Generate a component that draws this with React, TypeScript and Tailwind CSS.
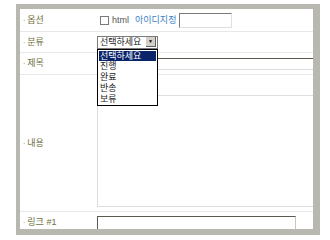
import React from "react";

const Label = ({ children }: { children: React.ReactNode }) => (
  <div className="w-[77px] shrink-0 pl-[3px] text-[#707040] flex items-center gap-[2px]">
    <span className="text-[7px]">·</span>
    <span>{children}</span>
  </div>
);

export default function App() {
  return (
    <div
      className="w-[330px] h-[240px] bg-white overflow-hidden text-[9px] leading-none"
      style={{ fontFamily: '"Liberation Sans", "Noto Sans CJK KR", sans-serif' }}
    >
      <div className="ml-[16px] mt-[4px] w-[304px] h-[231px] bg-[#b8b8b0] pl-[4px] pt-[5px] pr-[7px] pb-[6px]">
        <div className="w-full h-full bg-white overflow-hidden flex flex-col relative">
          {/* 옵션 */}
          <div className="h-[23px] flex border-b border-[#e8e8e8] shrink-0">
            <Label>옵션</Label>
            <div className="flex items-center pl-[3px]">
              <span className="w-[9px] h-[9px] border border-[#7a7a7a] bg-white mt-[1px]" />
              <span className="ml-[3px] text-[#555555]">html</span>
              <span className="ml-[6px] text-[#3d7fc6]">아이디지정</span>
              <span className="ml-[3px] w-[53px] h-[15px] border-t border-l border-t-[#7b7b7b] border-l-[#7b7b7b] border-r border-b border-r-[#e0e0e0] border-b-[#e0e0e0] bg-white" />
            </div>
          </div>
          {/* 분류 */}
          <div className="h-[21px] flex border-b border-[#e8e8e8] shrink-0">
            <Label>분류</Label>
            <div className="flex items-center relative">
              <div className="w-[61px] h-[13px] border border-[#7b7b7b] bg-white flex items-center justify-between pl-[2px] pr-[1px]">
                <span className="text-[#222]">선택하세요</span>
                <span className="w-[10px] h-[10px] bg-[#d4d0c8] border-r border-b border-[#606060] flex items-center justify-center text-[5px] text-black">
                  ▼
                </span>
              </div>
              <div className="absolute left-0 top-[17px] w-[61px] border border-black bg-white z-10 flex flex-col py-[1px]">
                <div className="h-[10px] mx-[1px] bg-[#0a246a] text-white flex items-center px-[1px]">선택하세요</div>
                <div className="h-[11px] flex items-center px-[2px] text-[#222]">진행</div>
                <div className="h-[11px] flex items-center px-[2px] text-[#222]">완료</div>
                <div className="h-[11px] flex items-center px-[2px] text-[#222]">반송</div>
                <div className="h-[10px] flex items-center px-[2px] text-[#222]">보류</div>
              </div>
            </div>
          </div>
          {/* 제목 */}
          <div className="h-[22px] flex border-b border-[#e8e8e8] shrink-0">
            <Label>제목</Label>
            <div className="flex-1 flex items-center">
              <span className="w-full h-[12px] border-t border-t-[#5a5a50] border-l border-l-[#5a5a50] border-b border-b-[#dcdcdc] bg-white" />
            </div>
          </div>
          {/* 내용 */}
          <div className="h-[137px] flex border-b border-[#e8e8e8] shrink-0">
            <Label>내용</Label>
            <div className="flex-1 flex flex-col pt-[20px] pb-[4px]">
              <div className="flex-1 border-l border-t border-b border-[#dedede] bg-white" />
            </div>
          </div>
          {/* 링크 */}
          <div className="h-[20px] flex shrink-0">
            <Label>링크 #1</Label>
            <div className="flex-1 pt-[4px]">
              <span className="block w-[199px] h-[15px] border-t border-l border-t-[#5a5a50] border-l-[#5a5a50] border-r border-r-[#c8c8c0] bg-white" />
            </div>
          </div>
        </div>
      </div>
    </div>
  );
}
